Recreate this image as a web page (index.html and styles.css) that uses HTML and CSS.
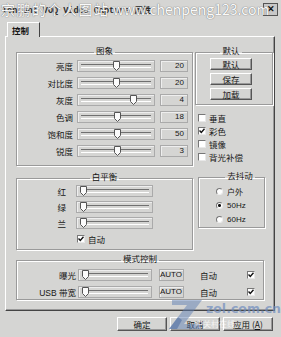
FILE: index.html
```html
<!DOCTYPE html>
<html lang="zh">
<head>
    <meta charset="UTF-8">
    <title>Tencent VOQ Video Capture 属性</title>
    <link rel="stylesheet" href="styles.css">
</head>
<body>
<div class="window">
    <div class="titlebar">
        <span class="title">Tencent VOQ Video Capture 属性</span>
        <span class="close">✕</span>
        <span class="mark"><span class="mark-cn">宗鹏的个人图站</span> www.chenpeng123.com</span>
    </div>
    <div class="tabs"><span class="tab">控制</span></div>

    <div class="panel">
        <div class="top">
            <fieldset class="group image">
                <legend>图象</legend>
                <div class="row"><span class="lbl">亮度</span><div class="slider"><i class="thumb" style="left:35px"></i></div><span class="val">20</span></div>
                <div class="row"><span class="lbl">对比度</span><div class="slider"><i class="thumb" style="left:35px"></i></div><span class="val">20</span></div>
                <div class="row"><span class="lbl">灰度</span><div class="slider"><i class="thumb" style="left:52px"></i></div><span class="val">4</span></div>
                <div class="row"><span class="lbl">色调</span><div class="slider"><i class="thumb" style="left:36px"></i></div><span class="val">18</span></div>
                <div class="row"><span class="lbl">饱和度</span><div class="slider"><i class="thumb" style="left:36px"></i></div><span class="val">50</span></div>
                <div class="row"><span class="lbl">锐度</span><div class="slider"><i class="thumb" style="left:36px"></i></div><span class="val">3</span></div>
            </fieldset>

            <div class="side">
                <fieldset class="group defaults">
                    <legend>默认</legend>
                    <div class="btns">
                        <span class="btn small">默认</span>
                        <span class="btn small">保存</span>
                        <span class="btn small">加载</span>
                    </div>
                </fieldset>
                <div class="checks">
                    <div class="check"><span class="box"></span>垂直</div>
                    <div class="check"><span class="box on"></span>彩色</div>
                    <div class="check"><span class="box"></span>镜像</div>
                    <div class="check"><span class="box"></span>背光补偿</div>
                </div>
            </div>
        </div>

        <div class="middle">
            <fieldset class="group wb">
                <legend>白平衡</legend>
                <div class="row"><span class="lbl">红</span><div class="slider"><i class="thumb" style="left:3px"></i></div></div>
                <div class="row"><span class="lbl">绿</span><div class="slider"><i class="thumb" style="left:3px"></i></div></div>
                <div class="row"><span class="lbl">兰</span><div class="slider"><i class="thumb" style="left:3px"></i></div></div>
                <div class="check auto"><span class="box on"></span>自动</div>
            </fieldset>

            <fieldset class="group flicker">
                <legend>去抖动</legend>
                <div class="radio"><span class="dot"></span>户外</div>
                <div class="radio"><span class="dot on"></span>50Hz</div>
                <div class="radio"><span class="dot"></span>60Hz</div>
            </fieldset>
        </div>

        <fieldset class="group mode">
            <legend>模式控制</legend>
            <div class="row"><span class="lbl">曝光</span><div class="slider"><i class="thumb" style="left:3px"></i></div><span class="val">AUTO</span><span class="auto-lbl">自动</span><span class="box on"></span></div>
            <div class="row"><span class="lbl">USB 带宽</span><div class="slider"><i class="thumb" style="left:3px"></i></div><span class="val">AUTO</span><span class="auto-lbl">自动</span><span class="box on"></span></div>
        </fieldset>
    </div>

    <div class="footer">
        <span class="btn">确定</span>
        <span class="btn">取消</span>
        <span class="btn">应用 (<u>A</u>)</span>
    </div>

    <div class="zol">
        <svg width="36" height="32" viewBox="0 0 36 32">
            <path d="M4 2 H34 L16 26 H33 V31 H1 L19 7 H4 Z" fill="#5f7fb3" opacity="0.5"/>
            <path d="M1 31 L10 19 L14 22 L9 31 Z" fill="#3d5f99" opacity="0.45"/>
        </svg>
        <span class="zol-url">zol.com.cn</span>
        <span class="zol-cn">中关村在线</span>
    </div>
</div>
</body>
</html>
```

FILE: styles.css
```css
* {
    box-sizing: border-box;
}

body {
    margin: 0;
    background: #d5d5d3;
    font-family: "Liberation Sans", "Noto Sans CJK SC", sans-serif;
    font-size: 8.5px;
    color: #151515;
}

.window {
    position: relative;
    width: 281px;
    height: 337px;
    overflow: hidden;
}

/* title bar */
.titlebar {
    position: relative;
    height: 19px;
    display: flex;
    align-items: center;
    padding: 0 3px 0 2px;
}
.title {
    font-family: "Liberation Mono", "Noto Sans CJK SC", monospace;
    font-weight: 700;
    font-size: 8.5px;
    color: #2a2a2a;
}
.close {
    margin-left: auto;
    width: 15px;
    height: 13px;
    border: 1px solid #555;
    background: #c8c8c8;
    font-size: 9px;
    line-height: 11px;
    text-align: center;
    font-weight: 700;
}
.mark {
    position: absolute;
    left: 1px;
    top: 0;
    font-family: "Noto Sans CJK SC", sans-serif;
    font-size: 14px;
    line-height: 18px;
    color: #fff;
    opacity: 0.9;
    text-shadow: 0 0 1px #777, 0 0 1px #777;
    white-space: nowrap;
}
.mark-cn {
    letter-spacing: 1.5px;
}

/* tab */
.tabs {
    display: flex;
    padding-left: 7px;
    margin-top: 3px;
}
.tab {
    position: relative;
    z-index: 1;
    width: 33px;
    height: 15px;
    margin-bottom: -1px;
    padding: 2px 0 0 4px;
    border-top: 1px solid #fff;
    border-left: 1px solid #fff;
    border-right: 1px solid #444;
    background: #d5d5d3;
    font-family: "Noto Sans CJK SC", sans-serif;
    font-weight: 700;
    line-height: 10px;
}

.panel {
    height: 275px;
    margin-left: 5px;
    width: 270px;
    padding: 8px 1px 0 10px;
    border-top: 1px solid #fff;
    border-left: 1px solid #fff;
    border-right: 1px solid #444;
    border-bottom: 1px solid #444;
    box-shadow: inset -1px -1px 0 #999;
}

/* group boxes */
.group {
    margin: 0;
    min-width: 0;
    padding: 0;
    border: 1px solid #9a9a9a;
    box-shadow: inset 1px 1px 0 #fff, 1px 1px 0 #fff;
}
.group legend {
    margin: 0 auto;
    padding: 0 2px 4px;
    line-height: 10px;
    font-family: "Noto Sans CJK SC", sans-serif;
}

.top {
    display: flex;
    align-items: flex-start;
}
.image {
    width: 177px;
    padding: 1px 0 8px;
    display: flex;
    flex-direction: column;
    gap: 5px;
}

.row {
    display: flex;
    align-items: center;
    height: 12px;
}
.lbl {
    width: 56px;
    text-align: right;
    white-space: nowrap;
}
.slider {
    position: relative;
    width: 78px;
    height: 12px;
    margin-left: 4px;
    border: 1px solid #aaa;
    box-shadow: inset 1px 1px 0 #eee;
    display: flex;
    align-items: center;
    padding: 0 3px;
}
.slider::before {
    content: "";
    flex: 1;
    height: 2px;
    border-top: 1px solid #707070;
    border-bottom: 1px solid #fff;
}
.thumb {
    position: absolute;
    top: 0;
    width: 7px;
    height: 10px;
    background: url("data:image/svg+xml,%3Csvg xmlns='http://www.w3.org/2000/svg' width='7' height='10'%3E%3Cpath d='M0.5 0.5H6.5V6.5L3.5 9.5L0.5 6.5Z' fill='%23fbfbfb' stroke='%23555'/%3E%3C/svg%3E") no-repeat;
}
.val {
    width: 28px;
    height: 12px;
    margin-left: 5px;
    border: 1px solid #aaa;
    box-shadow: inset 1px 1px 0 #eee;
    text-align: right;
    padding-right: 3px;
    font-size: 8px;
    line-height: 10px;
}

/* right side */
.side {
    margin-left: 2px;
}
.defaults {
    width: 78px;
    padding: 0 6px 4px 0;
}
.btns {
    margin-top: -1px;
    display: flex;
    flex-direction: column;
    align-items: center;
    gap: 3px;
}
.btn {
    display: block;
    width: 50px;
    height: 14px;
    border-top: 1px solid #fff;
    border-left: 1px solid #fff;
    border-right: 1px solid #555;
    border-bottom: 1px solid #555;
    box-shadow: inset -1px -1px 0 #999;
    text-align: center;
    line-height: 12px;
    font-family: "Noto Sans CJK SC", sans-serif;
}
.btn.small {
    width: 42px;
    height: 12px;
    line-height: 10px;
}
.btn u {
    text-decoration: underline;
}

.checks {
    margin: 6px 0 0 3px;
}
.check {
    display: flex;
    align-items: center;
    height: 13px;
    font-family: "Noto Sans CJK SC", sans-serif;
}
.box {
    display: inline-block;
    width: 8px;
    height: 8px;
    margin-right: 3px;
    background: #fff;
    border-top: 1px solid #777;
    border-left: 1px solid #777;
    border-right: 1px solid #e8e8e8;
    border-bottom: 1px solid #e8e8e8;
}
.box.on {
    background: #fff url("data:image/svg+xml,%3Csvg xmlns='http://www.w3.org/2000/svg' width='6' height='6'%3E%3Cpath d='M0.5 2.5L2.3 4.5L5.5 0.8' fill='none' stroke='%23111' stroke-width='1.4'/%3E%3C/svg%3E") no-repeat center;
}

.middle {
    display: flex;
    align-items: flex-start;
    margin-top: 5px;
}
.wb {
    width: 177px;
    padding: 0 0 5px;
    display: flex;
    flex-direction: column;
    gap: 4px;
}
.wb .lbl {
    width: 49px;
}
.wb .slider {
    width: 77px;
    margin-left: 10px;
}
.wb .auto {
    height: 10px;
    margin: 1px 0 0 60px;
}

.flicker {
    width: 67px;
    margin-left: 5px;
    margin-top: -1px;
    padding: 0 0 1px 17px;
}
.radio {
    display: flex;
    align-items: center;
    height: 14px;
    font-size: 8px;
}
.dot {
    width: 7px;
    height: 7px;
    margin-right: 4px;
    border-radius: 50%;
    background: #fff;
    border-top: 1px solid #777;
    border-left: 1px solid #777;
    border-right: 1px solid #eee;
    border-bottom: 1px solid #eee;
}
.dot.on {
    background: radial-gradient(circle, #111 0 1.3px, #fff 1.6px);
}

.mode {
    width: 248px;
    margin-top: 3px;
    padding: 2px 0 1px;
    display: flex;
    flex-direction: column;
    gap: 5px;
}
.mode .lbl {
    width: 59px;
}
.mode .slider {
    width: 74px;
    margin-left: 2px;
}
.mode .val {
    width: 25px;
    margin-left: 7px;
    padding-right: 1px;
}
.auto-lbl {
    width: 47px;
    margin-left: 16px;
    font-family: "Noto Sans CJK SC", sans-serif;
}

.footer {
    display: flex;
    justify-content: flex-end;
    gap: 3px;
    margin-top: 6px;
    padding-right: 8px;
}

/* watermark */
.zol {
    position: absolute;
    left: 168px;
    top: 298px;
    width: 112px;
    height: 36px;
    pointer-events: none;
}
.zol svg {
    position: absolute;
    left: 0;
    top: 0;
}
.zol-url {
    position: absolute;
    left: 38px;
    top: 3px;
    font-family: "DejaVu Sans", sans-serif;
    font-weight: 700;
    font-size: 12.5px;
    color: rgba(110, 140, 190, 0.7);
}
.zol-cn {
    position: absolute;
    left: 27px;
    top: 20px;
    font-family: "Noto Sans CJK SC", sans-serif;
    font-size: 8px;
    color: rgba(255, 255, 255, 0.75);
}
```
